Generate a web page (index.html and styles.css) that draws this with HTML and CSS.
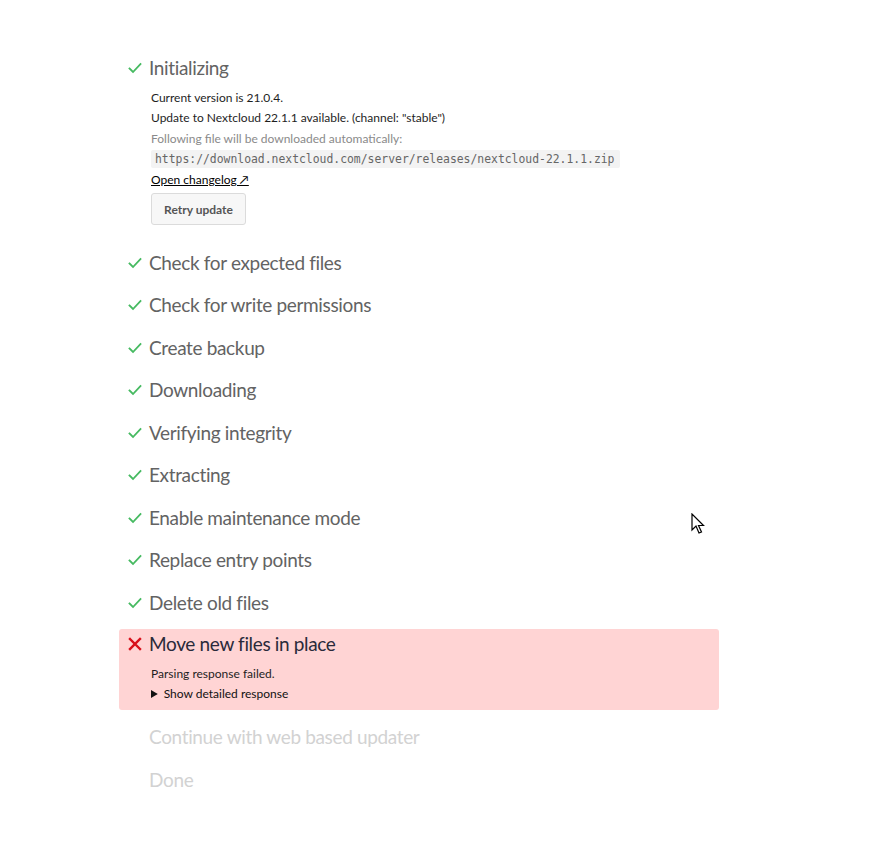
FILE: index.html
```html
<!DOCTYPE html>
<html lang="en">
<head>
    <meta charset="UTF-8">
    <title>Nextcloud Updater</title>
    <link rel="stylesheet" href="styles.css">
</head>
<body>
    <div class="updater">
        <ul class="steps">
            <li class="step done">
                <h2 class="step-title"><svg class="icon" viewBox="0 0 14 14"><path d="M1.5 7.5 L5 11 L12.5 3" /></svg>Initializing</h2>
                <div class="output">
                    <p>Current version is 21.0.4.</p>
                    <p>Update to Nextcloud 22.1.1 available. (channel: "stable")</p>
                    <p class="muted">Following file will be downloaded automatically:</p>
                    <p><code>https://download.nextcloud.com/server/releases/nextcloud-22.1.1.zip</code></p>
                    <p><a href="#" class="changelog">Open changelog ↗</a></p>
                    <button class="btn">Retry update</button>
                </div>
            </li>
            <li class="step done"><h2 class="step-title"><svg class="icon" viewBox="0 0 14 14"><path d="M1.5 7.5 L5 11 L12.5 3" /></svg>Check for expected files</h2></li>
            <li class="step done"><h2 class="step-title"><svg class="icon" viewBox="0 0 14 14"><path d="M1.5 7.5 L5 11 L12.5 3" /></svg>Check for write permissions</h2></li>
            <li class="step done"><h2 class="step-title"><svg class="icon" viewBox="0 0 14 14"><path d="M1.5 7.5 L5 11 L12.5 3" /></svg>Create backup</h2></li>
            <li class="step done"><h2 class="step-title"><svg class="icon" viewBox="0 0 14 14"><path d="M1.5 7.5 L5 11 L12.5 3" /></svg>Downloading</h2></li>
            <li class="step done"><h2 class="step-title"><svg class="icon" viewBox="0 0 14 14"><path d="M1.5 7.5 L5 11 L12.5 3" /></svg>Verifying integrity</h2></li>
            <li class="step done"><h2 class="step-title"><svg class="icon" viewBox="0 0 14 14"><path d="M1.5 7.5 L5 11 L12.5 3" /></svg>Extracting</h2></li>
            <li class="step done"><h2 class="step-title"><svg class="icon" viewBox="0 0 14 14"><path d="M1.5 7.5 L5 11 L12.5 3" /></svg>Enable maintenance mode</h2></li>
            <li class="step done"><h2 class="step-title"><svg class="icon" viewBox="0 0 14 14"><path d="M1.5 7.5 L5 11 L12.5 3" /></svg>Replace entry points</h2></li>
            <li class="step done"><h2 class="step-title"><svg class="icon" viewBox="0 0 14 14"><path d="M1.5 7.5 L5 11 L12.5 3" /></svg>Delete old files</h2></li>
            <li class="step failed">
                <h2 class="step-title"><svg class="icon" viewBox="0 0 14 14"><path d="M2 2 L12 12 M12 2 L2 12" /></svg>Move new files in place</h2>
                <div class="output">
                    <p>Parsing response failed.</p>
                    <details>
                        <summary>Show detailed response</summary>
                    </details>
                </div>
            </li>
            <li class="step pending"><h2 class="step-title"><span class="icon"></span>Continue with web based updater</h2></li>
            <li class="step pending"><h2 class="step-title"><span class="icon"></span>Done</h2></li>
        </ul>
    </div>

    <!-- mouse pointer captured in the screenshot -->
    <svg class="pointer" viewBox="0 0 14 22"><path d="M1 1 L1 17 L5 13 L8 20 L10.5 19 L7.5 12.5 L12.5 12.5 Z" /></svg>
</body>
</html>
```

FILE: styles.css
```css
/* Updater page */
:root {
    --text-color: #636363;
    --dark-text: #1e1e1e;
    --muted-text: #8a8a8a;
    --pending-text: #d2d2d2;
    --success-color: #46ba61;
    --error-color: #d8101a;
    --failed-bg: #ffd4d4;
}
body {
    font-family: 'Lato', 'Open Sans', sans-serif;
    background: #fff;
    color: var(--dark-text);
    margin: 0;
    padding: 0;
}
.updater {
    padding: 41px 0 0 119px;
}
.steps {
    list-style: none;
    margin: 0;
    padding: 0;
    width: 600px;
}
.step {
    margin-top: 12px;
    border-radius: 3px;
}
.step-title {
    display: flex;
    align-items: center;
    gap: 7px;
    margin: 0;
    padding: 3px 0 3px 9px;
    font-size: 19px;
    line-height: 24.5px;
    font-weight: 400;
    letter-spacing: -0.35px;
    color: var(--text-color);
}
.icon {
    width: 14px;
    height: 14px;
    flex-shrink: 0;
}
.icon path {
    fill: none;
    stroke-width: 1.8;
    stroke-linecap: square;
}
.done .icon path { stroke: var(--success-color); }
.failed .icon path { stroke: var(--error-color); stroke-width: 2.4; }

.failed { background-color: var(--failed-bg); margin-top: 11px; }
.failed .step-title { color: #2a2a3a; }
.pending .step-title { color: var(--pending-text); }

/* Step output */
.output {
    padding: 4px 5px 10.5px 32px;
    font-size: 12px;
    line-height: 20.5px;
}
.output p { margin: 0; }
.output .muted { color: var(--muted-text); }
code {
    font-family: 'DejaVu Sans Mono', monospace;
    font-size: 11.4px;
    color: #666;
    background-color: #f3f3f3;
    border-radius: 2px;
    padding: 2px 6px 2px 4px;
}
.changelog {
    color: #000;
    text-decoration: underline;
}
.btn {
    display: block;
    margin-top: 3px;
    height: 32px;
    width: 95px;
    font-family: inherit;
    font-size: 12px;
    font-weight: 700;
    color: #555;
    background-color: #f7f7f7;
    border: 1px solid #dbdbdb;
    border-radius: 3px;
    cursor: pointer;
}
details summary {
    cursor: pointer;
    color: #111;
}
.failed .output { padding-bottom: 5.5px; }

.pointer {
    position: absolute;
    left: 691px;
    top: 513px;
    width: 14px;
    height: 22px;
}
.pointer path {
    fill: #fff;
    stroke: #000;
    stroke-width: 1.2;
    stroke-linejoin: miter;
}
```
